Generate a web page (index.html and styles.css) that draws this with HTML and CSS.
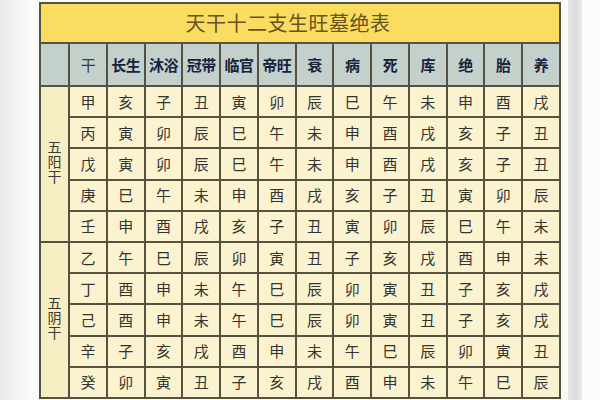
FILE: index.html
```html
<!DOCTYPE html>
<html lang="zh">
<head>
<meta charset="utf-8">
<link rel="stylesheet" href="styles.css">
</head>
<body>
<div class="page">
  <div class="sheet">
    <table class="chart">
      <colgroup>
        <col class="c-group">
        <col><col><col><col><col><col><col><col><col><col><col><col><col>
      </colgroup>
      <tr class="title-row"><td colspan="14" class="title">天干十二支生旺墓绝表</td></tr>
      <tr class="head">
        <th></th><th class="gan">干</th><th>长生</th><th>沐浴</th><th>冠带</th><th>临官</th><th>帝旺</th><th>衰</th><th>病</th><th>死</th><th>库</th><th>绝</th><th>胎</th><th>养</th>
      </tr>
      <tr><td rowspan="5" class="group"><span class="vt">五阳干</span></td><td>甲</td><td>亥</td><td>子</td><td>丑</td><td>寅</td><td>卯</td><td>辰</td><td>巳</td><td>午</td><td>未</td><td>申</td><td>酉</td><td>戌</td></tr>
      <tr><td>丙</td><td>寅</td><td>卯</td><td>辰</td><td>巳</td><td>午</td><td>未</td><td>申</td><td>酉</td><td>戌</td><td>亥</td><td>子</td><td>丑</td></tr>
      <tr><td>戊</td><td>寅</td><td>卯</td><td>辰</td><td>巳</td><td>午</td><td>未</td><td>申</td><td>酉</td><td>戌</td><td>亥</td><td>子</td><td>丑</td></tr>
      <tr><td>庚</td><td>巳</td><td>午</td><td>未</td><td>申</td><td>酉</td><td>戌</td><td>亥</td><td>子</td><td>丑</td><td>寅</td><td>卯</td><td>辰</td></tr>
      <tr><td>壬</td><td>申</td><td>酉</td><td>戌</td><td>亥</td><td>子</td><td>丑</td><td>寅</td><td>卯</td><td>辰</td><td>巳</td><td>午</td><td>未</td></tr>
      <tr><td rowspan="5" class="group"><span class="vt">五阴干</span></td><td>乙</td><td>午</td><td>巳</td><td>辰</td><td>卯</td><td>寅</td><td>丑</td><td>子</td><td>亥</td><td>戌</td><td>酉</td><td>申</td><td>未</td></tr>
      <tr><td>丁</td><td>酉</td><td>申</td><td>未</td><td>午</td><td>巳</td><td>辰</td><td>卯</td><td>寅</td><td>丑</td><td>子</td><td>亥</td><td>戌</td></tr>
      <tr><td>己</td><td>酉</td><td>申</td><td>未</td><td>午</td><td>巳</td><td>辰</td><td>卯</td><td>寅</td><td>丑</td><td>子</td><td>亥</td><td>戌</td></tr>
      <tr><td>辛</td><td>子</td><td>亥</td><td>戌</td><td>酉</td><td>申</td><td>未</td><td>午</td><td>巳</td><td>辰</td><td>卯</td><td>寅</td><td>丑</td></tr>
      <tr><td>癸</td><td>卯</td><td>寅</td><td>丑</td><td>子</td><td>亥</td><td>戌</td><td>酉</td><td>申</td><td>未</td><td>午</td><td>巳</td><td>辰</td></tr>
    </table>
  </div>
  <div class="edge"></div>
</div>
</body>
</html>
```

FILE: styles.css
```css
html, body {
  margin: 0;
  padding: 0;
}
body {
  width: 600px;
  height: 400px;
  overflow: hidden;
  background: #eeeeee;
  font-family: "Noto Sans CJK SC", "Noto Sans", sans-serif;
}
.page {
  display: flex;
  height: 400px;
  background: linear-gradient(to right, #e9e9e9 0, #f6f6f6 22px, #fbfbfb 30px);
}
.sheet {
  padding: 2px 0 0 39px;
  width: 529px;
}
.edge {
  width: 14px;
  background: linear-gradient(to right, #e6e6e6, #dcdcdc 60%, #ececec);
}
.chart {
  border-collapse: collapse;
  table-layout: fixed;
  width: 522px;
  border: 2px solid #4d4a3c;
}
.c-group {
  width: 29px;
}
.chart td, .chart th {
  border: 2px solid #55523f;
  padding: 0;
  text-align: center;
  vertical-align: middle;
  font-size: 15px;
  line-height: 16px;
  color: #333331;
  background: #fbf3cf;
  height: 29.2px;
}
.chart .title-row td.title {
  height: 38px;
  background: #f9dd60;
  color: #6b5120;
  font-size: 20px;
  font-weight: 400;
  letter-spacing: 0.5px;
  padding-right: 24px;
}
.chart .head th {
  height: 41px;
  background: #c3d0cb;
  color: #17223d;
  font-weight: 700;
  font-size: 15px;
  letter-spacing: -0.5px;
}
.chart .head th.gan {
  font-weight: 400;
  color: #3a3f44;
}
.chart td.group {
  background: #f7eec3;
  color: #3b3a33;
}
.vt {
  display: inline-block;
  writing-mode: vertical-rl;
  font-size: 14px;
  line-height: 16px;
  letter-spacing: 1px;
}
```
